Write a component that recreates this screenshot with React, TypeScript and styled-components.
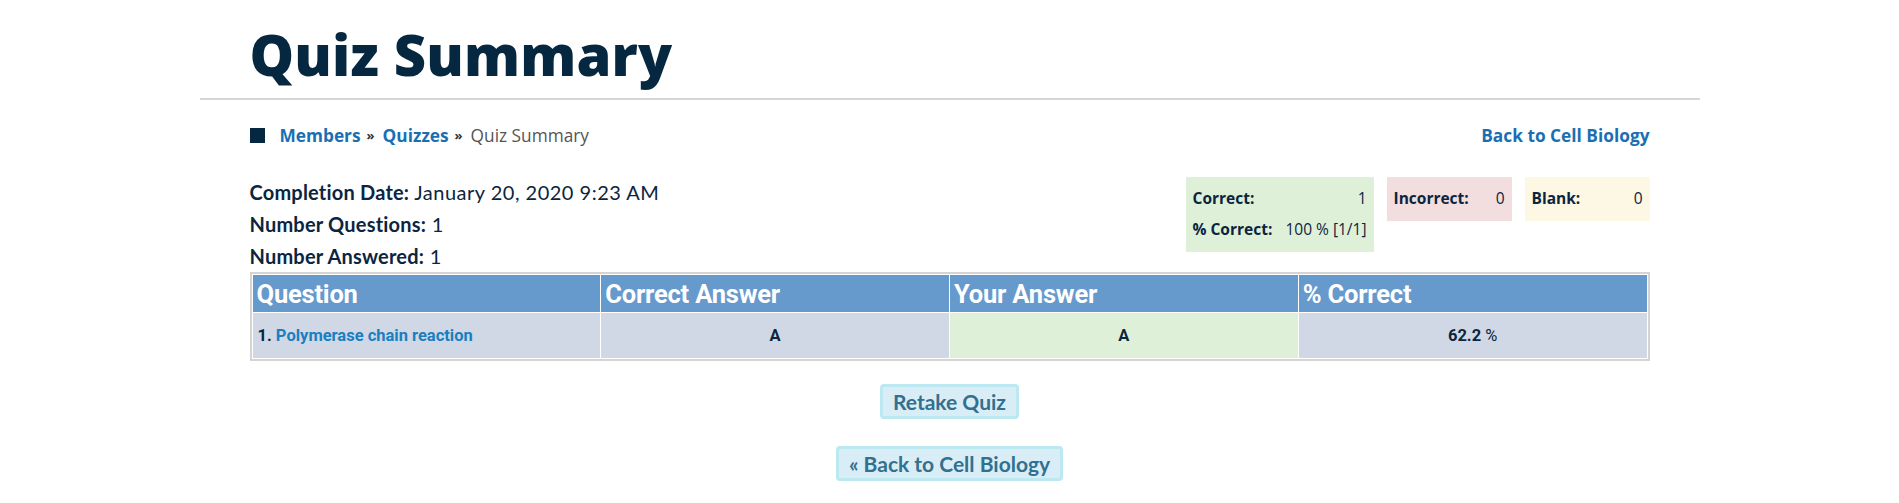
import React from "react";
import styled, { createGlobalStyle } from "styled-components";

const Global = createGlobalStyle`
  html, body { margin: 0; padding: 0; background: #fff; }
  body { font-family: Lato, "Liberation Sans", sans-serif; color: #0b2540; }
`;

const Page = styled.div`
  width: 1500px;
  margin: 0 auto;
`;

const Header = styled.header`
  padding: 14px 50px 4px;
  border-bottom: 2px solid #d6d6d6;
`;

const Title = styled.h1`
  margin: 0;
  font-family: "Open Sans", Lato, sans-serif;
  font-weight: 800;
  font-size: 56px;
  line-height: 80px;
  color: #062740;
  letter-spacing: 0.2px;
`;

const Content = styled.main`
  padding: 0 50px;
`;

const CrumbBar = styled.div`
  display: flex;
  align-items: center;
  justify-content: space-between;
  height: 26px;
  margin-top: 22px;
  font-family: "Open Sans", Lato, sans-serif;
  font-size: 17.3px;
`;

const Crumbs = styled.div`
  display: flex;
  align-items: center;
`;

const Square = styled.span`
  width: 15px;
  height: 15px;
  background: #062740;
  margin-right: 15px;
`;

const CrumbLink = styled.a`
  color: #1a6fb3;
  font-weight: 700;
  text-decoration: none;
`;

const Sep = styled.span`
  color: #333;
  font-weight: 700;
  font-size: 13px;
  margin: 0 8px 0 6px;
`;

const Current = styled.span`
  color: #555;
`;

const TopRow = styled.div`
  display: flex;
  justify-content: space-between;
  align-items: flex-start;
  margin-top: 29px;
`;

const Info = styled.div`
  display: flex;
  flex-direction: column;
  font-size: 20px;
  letter-spacing: 0.5px;
  line-height: 32px;
  margin-top: -1px;
`;

const Label = styled.b`
  font-weight: 700;
  letter-spacing: 0.2px;
`;

const Stats = styled.div`
  display: flex;
  align-items: flex-start;
  gap: 13px;
`;

const StatBox = styled.div<{ $bg: string; $w: number }>`
  background: ${(p) => p.$bg};
  width: ${(p) => p.$w}px;
  box-sizing: border-box;
  padding: 6px 7px 7px;
  display: grid;
  grid-template-columns: auto 1fr;
  column-gap: 10px;
  font-family: "Open Sans", Lato, sans-serif;
  font-size: 15.5px;
  line-height: 31px;
`;

const StatLabel = styled.span`
  font-weight: 700;
`;

const StatValue = styled.span`
  text-align: right;
`;

const Table = styled.table`
  width: 100%;
  margin-top: 0;
  border: 2px solid #d4d4d4;
  border-spacing: 1px;
  table-layout: fixed;
  background: #fff;
`;

const Th = styled.th`
  background: #6699cc;
  color: #fff;
  text-align: left;
  font-family: Roboto, "Liberation Sans", sans-serif;
  font-weight: 700;
  font-size: 25.5px;
  letter-spacing: -0.2px;
  height: 37px;
  padding: 0 4px;
`;

const Td = styled.td<{ $bg?: string; $align?: string }>`
  background: ${(p) => p.$bg || "#d0d8e6"};
  text-align: ${(p) => p.$align || "center"};
  font-family: Roboto, "Liberation Sans", sans-serif;
  font-weight: 700;
  font-size: 16.5px;
  height: 45px;
  padding: 0 5px;
  color: #0b2540;
`;

const QLink = styled.a`
  color: #1a7fc1;
  text-decoration: none;
`;

const Light = styled.span`
  font-weight: 400;
`;

const Actions = styled.div`
  display: flex;
  flex-direction: column;
  align-items: center;
  gap: 27px;
  margin-top: 23px;
`;

const Button = styled.a`
  display: inline-block;
  background: #d9edf7;
  border: 3px solid #bce8f1;
  border-radius: 4px;
  color: #31708f;
  font-weight: 700;
  font-size: 21px;
  line-height: 29px;
  padding: 0 10px;
  text-decoration: none;
`;

export default function App() {
  return (
    <>
      <Global />
      <Page>
        <Header>
          <Title>Quiz Summary</Title>
        </Header>
        <Content>
          <CrumbBar>
            <Crumbs>
              <Square />
              <CrumbLink href="#">Members</CrumbLink>
              <Sep>»</Sep>
              <CrumbLink href="#">Quizzes</CrumbLink>
              <Sep>»</Sep>
              <Current>Quiz Summary</Current>
            </Crumbs>
            <CrumbLink href="#">Back to Cell Biology</CrumbLink>
          </CrumbBar>
          <TopRow>
            <Info>
              <div>
                <Label>Completion Date:</Label> January 20, 2020 9:23 AM
              </div>
              <div>
                <Label>Number Questions:</Label> 1
              </div>
              <div>
                <Label>Number Answered:</Label> 1
              </div>
            </Info>
            <Stats>
              <StatBox $bg="#dff0d8" $w={188}>
                <StatLabel>Correct:</StatLabel>
                <StatValue>1</StatValue>
                <StatLabel>% Correct:</StatLabel>
                <StatValue>100 % [1/1]</StatValue>
              </StatBox>
              <StatBox $bg="#f2dede" $w={125}>
                <StatLabel>Incorrect:</StatLabel>
                <StatValue>0</StatValue>
              </StatBox>
              <StatBox $bg="#fcf8e3" $w={125}>
                <StatLabel>Blank:</StatLabel>
                <StatValue>0</StatValue>
              </StatBox>
            </Stats>
          </TopRow>
          <Table>
            <thead>
              <tr>
                <Th>Question</Th>
                <Th>Correct Answer</Th>
                <Th>Your Answer</Th>
                <Th>% Correct</Th>
              </tr>
            </thead>
            <tbody>
              <tr>
                <Td $align="left">
                  1. <QLink href="#">Polymerase chain reaction</QLink>
                </Td>
                <Td>A</Td>
                <Td $bg="#dff0d8">A</Td>
                <Td>
                  62.2 <Light>%</Light>
                </Td>
              </tr>
            </tbody>
          </Table>
          <Actions>
            <Button href="#">Retake Quiz</Button>
            <Button href="#">« Back to Cell Biology</Button>
          </Actions>
        </Content>
      </Page>
    </>
  );
}
